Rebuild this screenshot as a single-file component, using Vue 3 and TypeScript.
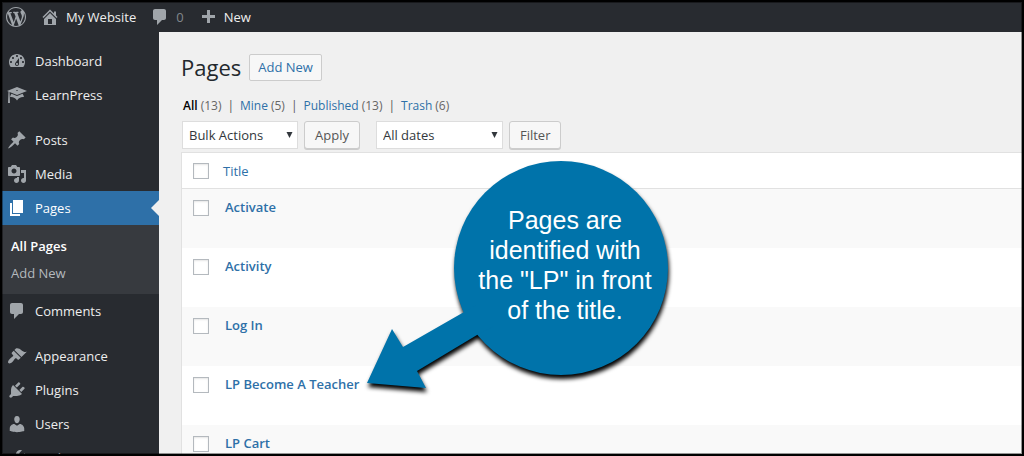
<script setup lang="ts">
import { ref } from 'vue'

interface MenuItem {
  label: string
  icon: string
  separated?: boolean
  current?: boolean
}

const icons = {
  wordpress:
    'M20 10c0-5.51-4.49-10-10-10C4.48 0 0 4.49 0 10c0 5.52 4.48 10 10 10 5.51 0 10-4.48 10-10zM7.78 15.37L4.37 6.22c.55-.02 1.17-.08 1.17-.08.5-.06.44-1.13-.06-1.11 0 0-1.45.11-2.37.11-.18 0-.37 0-.58-.01C4.12 2.69 6.87 1.11 10 1.11c2.33 0 4.45.87 6.05 2.34-.68-.11-1.65.39-1.65 1.58 0 .74.45 1.36.9 2.1.35.61.55 1.36.55 2.46 0 1.49-1.4 5-1.4 5l-3.03-8.37c.54-.02.82-.17.82-.17.5-.05.44-1.25-.06-1.22 0 0-1.44.12-2.38.12-.87 0-2.33-.12-2.33-.12-.5-.03-.56 1.2-.06 1.22l.92.08 1.26 3.41zM17.41 10c.24-.64.74-1.87.43-4.25.7 1.29 1.05 2.71 1.05 4.25 0 3.29-1.73 6.24-4.4 7.78.97-2.59 1.94-5.2 2.92-7.78zM6.1 18.09C3.12 16.65 1.11 13.53 1.11 10c0-1.3.23-2.48.72-3.59C3.25 10.3 4.67 14.2 6.1 18.09zm4.03-6.63l2.58 6.98c-.86.29-1.76.45-2.71.45-.79 0-1.57-.11-2.29-.33.81-2.38 1.62-4.74 2.42-7.1z',
  home: 'M16 8.5l1.53 1.53-1.06 1.06L10 4.6l-6.47 6.49-1.06-1.06L10 2.5l4 4v-2h2v4zm-6-2.46l6 5.99V18H4v-5.97zM12 17v-5H8v5h4z',
  comments: 'M5 2h9c1.1 0 2 .9 2 2v7c0 1.1-.9 2-2 2h-2l-5 5v-5H5c-1.1 0-2-.9-2-2V4c0-1.1.9-2 2-2z',
  plus: 'M17 7v3h-5v5H9v-5H4V7h5V2h3v5h5z',
  dashboard:
    'M3.76 16h12.48c1.1-1.37 1.76-3.11 1.76-5 0-4.42-3.58-8-8-8s-8 3.58-8 8c0 1.89.66 3.63 1.76 5zM10 4c.55 0 1 .45 1 1s-.45 1-1 1-1-.45-1-1 .45-1 1-1zM6 6c.55 0 1 .45 1 1s-.45 1-1 1-1-.45-1-1 .45-1 1-1zm8 0c.55 0 1 .45 1 1s-.45 1-1 1-1-.45-1-1 .45-1 1-1zm-5.37 5.55L12 7v6c0 1.1-.9 2-2 2s-2-.9-2-2c0-.57.24-1.08.63-1.45zM4 10c.55 0 1 .45 1 1s-.45 1-1 1-1-.45-1-1 .45-1 1-1zm12 0c.55 0 1 .45 1 1s-.45 1-1 1-1-.45-1-1 .45-1 1-1zm-5 3c0-.55-.45-1-1-1s-1 .45-1 1 .45 1 1 1 1-.45 1-1z',
  learn: 'M10 10L2.54 7.02 3 18H1l.48-11.41L0 6l10-4 10 4zm0-5c-.55 0-1 .22-1 .5s.45.5 1 .5 1-.22 1-.5-.45-.5-1-.5zm0 6l5.57-2.23c.71.94 1.2 2.07 1.36 3.3-.3-.04-.61-.07-.93-.07-2.55 0-4.78 1.37-6 3.41C8.78 13.37 6.55 12 4 12c-.32 0-.63.03-.93.07.16-1.23.65-2.36 1.36-3.3z',
  post: 'M10.44 3.02l1.82-1.82 6.36 6.35-1.83 1.82c-1.05-.68-2.48-.57-3.41.36l-.75.75c-.92.93-1.04 2.35-.35 3.41l-1.83 1.82-2.41-2.41-2.8 2.79c-.42.42-3.38 2.71-3.8 2.29s1.86-3.39 2.28-3.81l2.79-2.79L4.1 9.36l1.83-1.82c1.05.69 2.48.57 3.4-.36l.75-.75c.93-.92 1.05-2.35.36-3.41z',
  media:
    'M13 11V4c0-.55-.45-1-1-1h-1.67L9 1H5L3.67 3H2c-.55 0-1 .45-1 1v7c0 .55.45 1 1 1h10c.55 0 1-.45 1-1zM7 4.5c1.38 0 2.5 1.12 2.5 2.5S8.38 9.5 7 9.5 4.5 8.38 4.5 7 5.62 4.5 7 4.5zM14 6h5v10.5c0 1.38-1.12 2.5-2.5 2.5S14 17.88 14 16.5s1.12-2.5 2.5-2.5c.17 0 .34.02.5.05V9h-3V6zm-4 8.05V13h2v3.5c0 1.38-1.12 2.5-2.5 2.5S7 17.88 7 16.5 8.12 14 9.5 14c.17 0 .34.02.5.05z',
  page: 'M6 15V2h10v13H6zm-1 1h8v2H3V5h2v11z',
  appearance:
    'M14.48 11.06L7.41 3.99l1.5-1.5c.5-.56 2.3-.47 3.51.32 1.21.8 1.43 1.28 2.91 2.1 1.18.64 2.45 1.26 4.45.85zm-.71.71L6.7 4.7 4.93 6.47c-.39.39-.39 1.02 0 1.41l1.06 1.06c.39.39.39 1.03 0 1.42-.6.6-1.43 1.11-2.21 1.69-.35.26-.7.53-1.01.84C1.43 14.23.4 16.08 1.4 17.07c.99 1 2.84-.03 4.18-1.36.31-.31.58-.66.85-1.02.57-.78 1.08-1.61 1.69-2.21.39-.39 1.02-.39 1.41 0l1.06 1.06c.39.39 1.02.39 1.41 0z',
  plugins:
    'M13.11 4.36L9.87 7.6 8 5.73l3.24-3.24c.35-.34 1.05-.2 1.56.32.52.51.66 1.21.31 1.55zm-8 1.77l.91-1.12 9.01 9.01-1.19.84c-.71.71-2.63 1.16-3.82 1.16H6.14L4.9 17.26c-.59.59-1.54.59-2.12 0-.59-.58-.59-1.53 0-2.12l1.24-1.24v-3.88c0-1.13.4-3.19 1.09-3.89zm7.26 3.97l3.24-3.24c.34-.35 1.04-.21 1.55.31.52.51.66 1.21.31 1.55l-3.24 3.25z',
  users:
    'M10 9.25c-2.27 0-2.73-3.44-2.73-3.44C7 4.02 7.82 2 9.97 2c2.16 0 2.98 2.02 2.71 3.81 0 0-.41 3.44-2.68 3.44zm0 2.57L12.72 10c2.39 0 4.52 2.33 4.52 4.53v2.49s-3.65 1.13-7.24 1.13c-3.65 0-7.24-1.13-7.24-1.13v-2.49c0-2.25 1.94-4.48 4.47-4.48z',
  tools:
    'M16.68 9.77c-1.34 1.34-3.3 1.67-4.95.99l-5.41 6.52c-.99.99-2.59.99-3.58 0s-.99-2.59 0-3.57l6.52-5.42c-.68-1.65-.35-3.61.99-4.95 1.28-1.28 3.12-1.62 4.72-1.06l-2.89 2.89 2.82 2.82 2.86-2.87c.53 1.58.18 3.39-1.08 4.65zM3.81 16.21c.4.39 1.04.39 1.43 0 .4-.4.4-1.04 0-1.43-.39-.4-1.03-.4-1.43 0-.39.39-.39 1.03 0 1.43z',
}

const menu: MenuItem[] = [
  { label: 'Dashboard', icon: icons.dashboard },
  { label: 'LearnPress', icon: icons.learn },
  { label: 'Posts', icon: icons.post, separated: true },
  { label: 'Media', icon: icons.media },
  { label: 'Pages', icon: icons.page, current: true },
  { label: 'Comments', icon: icons.comments },
  { label: 'Appearance', icon: icons.appearance, separated: true },
  { label: 'Plugins', icon: icons.plugins },
  { label: 'Users', icon: icons.users },
  { label: 'Tools', icon: icons.tools },
]

const views = [
  { label: 'All', count: 13, current: true },
  { label: 'Mine', count: 5, current: false },
  { label: 'Published', count: 13, current: false },
  { label: 'Trash', count: 6, current: false },
]

const pages = ['Activate', 'Activity', 'Log In', 'LP Become A Teacher', 'LP Cart']
const selected = ref<string[]>([])
const bulkAction = ref('Bulk Actions')
const dateFilter = ref('All dates')

function toggleAll(event: Event) {
  selected.value = (event.target as HTMLInputElement).checked ? [...pages] : []
}
</script>

<template>
  <div class="shell">
    <header class="bar">
      <a class="bar-link logo" href="#" aria-label="WordPress">
        <svg class="icon" viewBox="0 0 20 20"><path :d="icons.wordpress" /></svg>
      </a>
      <a class="bar-link site" href="#">
        <svg class="icon" viewBox="0 0 20 20"><path :d="icons.home" /></svg>
        <span>My Website</span>
      </a>
      <a class="bar-link replies" href="#">
        <svg class="icon" viewBox="0 0 20 20"><path :d="icons.comments" /></svg>
        <span class="muted">0</span>
      </a>
      <a class="bar-link create" href="#">
        <svg class="icon" viewBox="0 -1 20 20"><path :d="icons.plus" /></svg>
        <span>New</span>
      </a>
    </header>

    <div class="body">
      <nav class="sidebar" aria-label="Main menu">
        <ul class="menu">
          <li v-for="item in menu" :key="item.label" :class="{ separated: item.separated }">
            <a class="menu-link" :class="{ current: item.current }" href="#">
              <svg class="icon" viewBox="0 0 20 20"><path :d="item.icon" /></svg>
              <span>{{ item.label }}</span>
            </a>
            <ul v-if="item.current" class="submenu">
              <li><a class="active" href="#">All Pages</a></li>
              <li><a href="#">Add New</a></li>
            </ul>
          </li>
        </ul>
      </nav>

      <main class="content">
        <div class="heading">
          <h1>Pages</h1>
          <button class="add" type="button">Add New</button>
        </div>

        <ul class="views">
          <li v-for="view in views" :key="view.label">
            <a href="#" :class="{ active: view.current }">{{ view.label }}</a>
            <span class="count">({{ view.count }})</span>
          </li>
        </ul>

        <div class="filters">
          <label class="picker bulk">
            <select v-model="bulkAction" aria-label="Bulk action">
              <option>Bulk Actions</option>
              <option>Edit</option>
              <option>Move to Trash</option>
            </select>
            <svg class="caret" viewBox="0 0 6 6"><path d="M0 0h6L3 6z" /></svg>
          </label>
          <button class="action" type="button">Apply</button>
          <label class="picker dates">
            <select v-model="dateFilter" aria-label="Filter by date">
              <option>All dates</option>
            </select>
            <svg class="caret" viewBox="0 0 6 6"><path d="M0 0h6L3 6z" /></svg>
          </label>
          <button class="action" type="button">Filter</button>
        </div>

        <table class="list">
          <thead>
            <tr>
              <th class="pick">
                <input type="checkbox" aria-label="Select all" @change="toggleAll" />
              </th>
              <th class="name"><a href="#">Title</a></th>
            </tr>
          </thead>
          <tbody>
            <tr v-for="page in pages" :key="page">
              <td class="pick">
                <input v-model="selected" type="checkbox" :value="page" :aria-label="`Select ${page}`" />
              </td>
              <td class="name"><a href="#">{{ page }}</a></td>
            </tr>
          </tbody>
        </table>
      </main>
    </div>

    <aside class="callout">
      <svg class="bubble" viewBox="0 0 304 228">
        <circle cx="195" cy="108" r="107" />
        <path d="M1 223L26 169L37 187L112 144L130 165L111 175L51 211L60 228Z" />
      </svg>
      <p>Pages are<br />identified with<br />the "LP" in front<br />of the title.</p>
    </aside>
    <div class="frame"></div>
  </div>
</template>

<style>
body {
  background: #f0f0f0;
}
</style>

<style scoped>
.shell {
  position: relative;
  display: flex;
  flex-direction: column;
  height: 100vh;
  overflow: hidden;
  box-sizing: border-box;
  padding: 2px 2px 0;
  background: #f0f0f0;
  color: #555;
  font: 13px/18px 'Open Sans', 'Noto Sans', sans-serif;
}

.shell *,
.shell *::before,
.shell *::after {
  box-sizing: border-box;
}

a {
  color: #2e70a8;
  text-decoration: none;
}

ul {
  margin: 0;
  padding: 0;
  list-style: none;
}

.icon {
  flex: none;
  width: 20px;
  height: 20px;
  fill: #a0a5aa;
}

.bar {
  display: flex;
  flex: none;
  align-items: center;
  gap: 14px;
  height: 30px;
  padding-left: 4px;
  background: #282b30;
}

.bar-link {
  display: flex;
  align-items: center;
  gap: 6px;
  color: #eee;
}

.muted {
  color: #82878c;
}

.body {
  display: flex;
  flex: none;
}

.sidebar {
  flex: none;
  width: 157px;
  padding-top: 12px;
  background: #282b30;
}

.separated {
  margin-top: 11px;
}

.menu-link {
  position: relative;
  display: flex;
  align-items: center;
  gap: 8px;
  height: 34px;
  padding-left: 5px;
  color: #eee;
}

.menu-link.current {
  background: #2e70a8;
  color: #fff;
}

.menu-link.current .icon {
  fill: #fff;
}

.menu-link.current::after {
  position: absolute;
  top: 9px;
  right: 0;
  border: 8px solid transparent;
  border-left-width: 0;
  border-right-color: #f0f0f0;
  content: '';
}

.submenu {
  padding: 8px 0 7px;
  background: #373a3f;
}

.submenu a {
  display: block;
  padding: 4px 9px 5px;
  color: #b4b9be;
}

.submenu a.active {
  color: #fff;
  font-weight: 600;
}

.content {
  flex: 1;
  min-width: 0;
  padding: 20px 0 0 22px;
}

.heading {
  display: flex;
  align-items: center;
  gap: 8px;
  height: 30px;
}

h1 {
  margin: 0;
  color: #23282d;
  font-size: 22px;
  font-weight: 400;
  line-height: 30px;
}

button,
select {
  font: inherit;
}

.add {
  height: 27px;
  padding: 0 8px;
  border: 1px solid #ccc;
  border-radius: 2px;
  background: #f7f7f7;
  color: #2e70a8;
  font-weight: 500;
}

.views {
  display: flex;
  margin: 15px 0 6px 2px;
  font-size: 12px;
}

.views li:not(:last-child)::after {
  margin: 0 6px;
  content: '|';
}

.views .active {
  color: #000;
  font-weight: 600;
}

.count {
  margin-left: 3px;
  color: #666;
}

.filters {
  display: flex;
  gap: 6px;
  padding-left: 1px;
}

.picker {
  position: relative;
  display: block;
}

.bulk {
  width: 116px;
}

.dates {
  width: 127px;
  margin-left: 10px;
}

select {
  width: 100%;
  height: 28px;
  padding: 0 20px 0 6px;
  border: 1px solid #ddd;
  border-radius: 0;
  background: #fff;
  color: #32373c;
  appearance: none;
}

.caret {
  position: absolute;
  top: 11px;
  right: 5px;
  width: 7px;
  height: 6px;
  fill: #32373c;
  pointer-events: none;
}

.action {
  height: 28px;
  padding: 0 10px;
  border: 1px solid #ccc;
  border-radius: 3px;
  background: #f7f7f7;
  box-shadow: 0 1px 0 #ccc;
  color: #555;
}

.list {
  width: 100%;
  margin-top: 3px;
  border: 1px solid #e1e1e1;
  border-right: 0;
  border-spacing: 0;
  background: #fff;
}

th,
td {
  padding: 0;
  text-align: left;
  vertical-align: top;
}

th {
  height: 36px;
  padding-top: 9px;
  border-bottom: 1px solid #e1e1e1;
  font-weight: 400;
}

td {
  height: 59px;
  padding-top: 9px;
}

.pick {
  width: 41px;
  padding-left: 11px;
}

td.name {
  padding-left: 2px;
  font-weight: 600;
}

tbody tr:nth-child(odd) {
  background: #f9f9f9;
}

input {
  display: block;
  width: 16px;
  height: 16px;
  margin: 2px 0 0;
  border: 1px solid #b4b9be;
  background: #fff;
  box-shadow: inset 0 1px 2px rgba(0, 0, 0, 0.1);
  appearance: none;
}

th input {
  margin-top: 1px;
}

input:checked {
  background: #2e70a8;
}

/* Annotation floating over the page list */
.callout {
  position: absolute;
  top: 160px;
  left: 366px;
  width: 304px;
}

.bubble {
  display: block;
  width: 304px;
  height: 228px;
  overflow: visible;
  fill: #0073aa;
  filter: drop-shadow(1px 4px 2px #000);
}

.callout p {
  position: absolute;
  top: 45px;
  left: 99px;
  width: 200px;
  margin: 0;
  color: #fff;
  font: 25px/30px 'Liberation Sans', Arial, sans-serif;
  text-align: center;
}

.frame {
  position: absolute;
  inset: 0;
  border: 2px solid #000;
  box-shadow: inset 0 0 0 1px rgba(0, 0, 0, 0.4);
  pointer-events: none;
}
</style>
